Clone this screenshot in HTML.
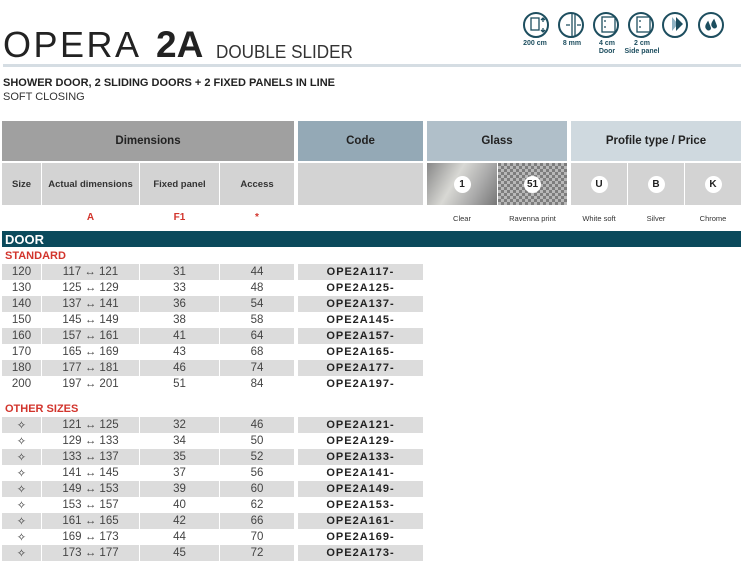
<!DOCTYPE html>
<html><head><meta charset="utf-8"><style>
body{margin:0;width:745px;height:566px;background:#fff;position:relative;overflow:hidden;font-family:"Liberation Sans",sans-serif;color:#333}
.a{position:absolute}
.c{position:absolute;display:flex;align-items:center;justify-content:center;text-align:center}
.r .c{height:16px;font-size:11.5px;color:#444}
.g .c{background:#dcdcdc}
.code{font-weight:bold;letter-spacing:1px;color:#222 !important;font-size:11px !important}
.ic{position:absolute;top:12px;width:22px;height:22px;border:2px solid #1d4e5f;border-radius:50%}
.il{position:absolute;top:40px;font-size:7px;font-weight:bold;color:#1d4e5f;text-align:center;width:50px;line-height:8px}
.badge{width:17px;height:17px;border-radius:50%;background:#fff;font-weight:bold;font-size:10px;display:flex;align-items:center;justify-content:center;color:#222}
</style></head><body>
<div class="a" style="left:3px;top:25px;font-size:36px;color:#222;line-height:40px;letter-spacing:2.5px">OPERA</div>
<div class="a" style="left:156px;top:25px;font-size:37px;font-weight:bold;color:#222;line-height:40px">2A</div>
<div class="a" style="left:216px;top:40px;font-size:18px;color:#333;line-height:24px;transform:scaleX(0.95);transform-origin:0 0">DOUBLE SLIDER</div>
<div class="a" style="left:3px;top:64px;width:738px;height:3px;background:#d5dde3"></div>
<div class="a" style="left:3px;top:77px;font-size:11px;font-weight:bold;color:#222">SHOWER DOOR, 2 SLIDING DOORS + 2 FIXED PANELS IN LINE</div>
<div class="a" style="left:3px;top:91px;font-size:11px;color:#333">SOFT CLOSING</div>

<div class="ic" style="left:523px"></div><div class="ic" style="left:558px"></div><div class="ic" style="left:593px"></div><div class="ic" style="left:628px"></div><div class="ic" style="left:662px"></div><div class="ic" style="left:698px"></div>
<svg class="a" style="left:515px;top:0" width="230" height="40" fill="none" stroke="#1d4e5f" stroke-width="1.3">
<rect x="16" y="18" width="8" height="12"/><path d="M28 18v4M28 28v4M26 20l2-2 2 2M26 30l2 2 2-2"/>
<path d="M57 14v22M60 14v22M51 25h4M62 25h4"/>
<rect x="87" y="17" width="13" height="15"/><path d="M89 21h2M89 27h2"/>
<rect x="122" y="17" width="13" height="15"/><path d="M124 21h2M124 27h2"/>
<path d="M157 17l6 7-6 7z" fill="#8fb3c4" stroke="none"/><path d="M161 17l7 7-7 7z" fill="#1d4e5f" stroke="none"/>
<path d="M193 22c-2 3-3 5-1 7s4 0 3-2zM199 20c-2 3-3 5-1 7s4 0 3-2z" fill="#1d4e5f"/>
</svg>
<div class="il" style="left:510px">200 cm</div><div class="il" style="left:547px">8 mm</div><div class="il" style="left:582px">4 cm<br>Door</div><div class="il" style="left:617px">2 cm<br>Side panel</div>

<div class="c" style="left:2px;top:121px;width:292px;height:40px;background:#a0a0a0;font-weight:bold;font-size:11.5px;color:#222">Dimensions</div>
<div class="c" style="left:298px;top:121px;width:125px;height:40px;background:#94a9b6;font-weight:bold;font-size:11.5px;color:#222">Code</div>
<div class="c" style="left:427px;top:121px;width:140px;height:40px;background:#b0bfc9;font-weight:bold;font-size:11.5px;color:#222">Glass</div>
<div class="c" style="left:571px;top:121px;width:170px;height:40px;background:#cfd9df;font-weight:bold;font-size:11.5px;color:#222">Profile type / Price</div>
<div class="c" style="left:2px;top:163px;width:39px;height:42px;background:#d3d3d3;font-weight:bold;font-size:9.5px">Size</div>
<div class="c" style="left:42px;top:163px;width:97px;height:42px;background:#d3d3d3;font-weight:bold;font-size:9.5px">Actual dimensions</div>
<div class="c" style="left:140px;top:163px;width:79px;height:42px;background:#d3d3d3;font-weight:bold;font-size:9.5px">Fixed panel</div>
<div class="c" style="left:220px;top:163px;width:74px;height:42px;background:#d3d3d3;font-weight:bold;font-size:9.5px">Access</div>
<div class="c" style="left:298px;top:163px;width:125px;height:42px;background:#d3d3d3"></div>
<div class="c" style="left:427px;top:163px;width:70px;height:42px;background:linear-gradient(120deg,#888 0%,#d8d8d4 40%,#aaa 70%,#777 100%)"><div class="badge">1</div></div>
<div class="c" style="left:498px;top:163px;width:69px;height:42px;background:repeating-conic-gradient(#b8b8b8 0 25%,#7d7d7d 0 50%) 0 0/6px 6px"><div class="badge">51</div></div>
<div class="c" style="left:571px;top:163px;width:56px;height:42px;background:#d3d3d3"><div class="badge">U</div></div>
<div class="c" style="left:628px;top:163px;width:56px;height:42px;background:#d3d3d3"><div class="badge">B</div></div>
<div class="c" style="left:685px;top:163px;width:56px;height:42px;background:#d3d3d3"><div class="badge">K</div></div>
<div class="c" style="left:42px;top:210px;width:97px;height:14px;color:#d2342c;font-weight:bold;font-size:10px">A</div>
<div class="c" style="left:140px;top:210px;width:79px;height:14px;color:#d2342c;font-weight:bold;font-size:10px">F1</div>
<div class="c" style="left:220px;top:210px;width:74px;height:14px;color:#d2342c;font-weight:bold;font-size:10px">*</div>
<div class="c" style="left:427px;top:211px;width:70px;height:14px;font-size:7.5px">Clear</div>
<div class="c" style="left:498px;top:211px;width:69px;height:14px;font-size:7.5px">Ravenna print</div>
<div class="c" style="left:571px;top:211px;width:56px;height:14px;font-size:7.5px">White soft</div>
<div class="c" style="left:628px;top:211px;width:56px;height:14px;font-size:7.5px">Silver</div>
<div class="c" style="left:685px;top:211px;width:56px;height:14px;font-size:7.5px">Chrome</div>

<div class="a" style="left:2px;top:231px;width:739px;height:16px;background:#0b4a5c;color:#fff;font-weight:bold;font-size:13px;line-height:17px;padding-left:3px;box-sizing:border-box">DOOR</div>
<div class="a" style="left:5px;top:250px;color:#d2342c;font-weight:bold;font-size:11px">STANDARD</div>
<div class="a" style="left:5px;top:403px;color:#d2342c;font-weight:bold;font-size:11px">OTHER SIZES</div>

<div id="rows"></div>
<script>
var cols=[[2,39],[42,97],[140,79],[220,74],[298,125]];
function row(top,g,vals){var h='<div class="r'+(g?' g':'')+'">';vals.forEach(function(v,i){h+='<div class="c'+(i==4?' code':'')+'" style="left:'+cols[i][0]+'px;top:'+top+'px;width:'+cols[i][1]+'px">'+v+'</div>';});return h+'</div>';}
var s=[[120,117,121,31,44],[130,125,129,33,48],[140,137,141,36,54],[150,145,149,38,58],[160,157,161,41,64],[170,165,169,43,68],[180,177,181,46,74],[200,197,201,51,84]];
var o=[[121,125,32,46],[129,133,34,50],[133,137,35,52],[141,145,37,56],[149,153,39,60],[153,157,40,62],[161,165,42,66],[169,173,44,70],[173,177,45,72]];
var h='';
s.forEach(function(r,i){h+=row(264+16*i,i%2==0,[r[0],r[1]+' &#8596; '+r[2],r[3],r[4],'OPE2A'+r[1]+'-']);});
o.forEach(function(r,i){h+=row(417+16*i,i%2==0,['&#10023;',r[0]+' &#8596; '+r[1],r[2],r[3],'OPE2A'+r[0]+'-']);});
document.getElementById('rows').innerHTML=h;
</script>
</body></html>
